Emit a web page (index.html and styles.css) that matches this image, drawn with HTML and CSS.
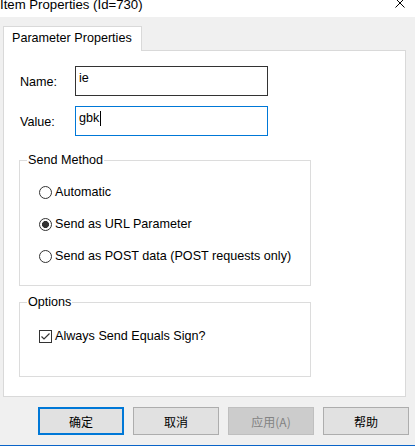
FILE: index.html
```html
<!DOCTYPE html>
<html>
<head>
<meta charset="utf-8">
<link rel="stylesheet" href="styles.css">
</head>
<body>
<div class="titlebar">
  <span class="title">Item Properties (Id=730)</span>
  <svg class="close" width="10" height="10" viewBox="0 0 10 10"><path d="M0.5 0.5 L9.5 9.5 M9.5 0.5 L0.5 9.5" stroke="#000" stroke-width="1" fill="none"/></svg>
</div>
<div class="dialog">
  <div class="tabs"><div class="tab">Parameter Properties</div></div>
  <div class="panel">
    <div class="field">
      <label>Name:</label>
      <div class="textbox">ie</div>
    </div>
    <div class="field">
      <label>Value:</label>
      <div class="textbox focused">gbk<span class="caret"></span></div>
    </div>
    <fieldset class="group method">
      <legend>Send Method</legend>
      <div class="choice"><span class="radio"></span>Automatic</div>
      <div class="choice"><span class="radio checked"></span>Send as URL Parameter</div>
      <div class="choice"><span class="radio"></span>Send as POST data (POST requests only)</div>
    </fieldset>
    <fieldset class="group options">
      <legend>Options</legend>
      <div class="choice"><span class="checkbox"><svg width="11" height="11" viewBox="0 0 11 11"><path d="M1.5 5.5 L4 8 L9.5 2.5" stroke="#333" stroke-width="1.2" fill="none"/></svg></span>Always Send Equals Sign?</div>
    </fieldset>
  </div>
  <div class="buttons">
    <button class="btn default">确定</button>
    <button class="btn">取消</button>
    <button class="btn disabled">应用(A)</button>
    <button class="btn">帮助</button>
  </div>
</div>
<div class="footer"></div>
</body>
</html>
```
FILE: styles.css
```css
html, body {
  margin: 0;
  padding: 0;
}
body {
  width: 415px;
  height: 447px;
  overflow: hidden;
  background: #f0f0f0;
  font-family: "Liberation Sans", Arial, sans-serif;
  font-size: 12.6px;
  color: #000;
}
.titlebar {
  height: 17px;
  background: #fff;
  display: flex;
  justify-content: space-between;
  overflow: hidden;
}
.title {
  font-size: 13.2px;
  line-height: 10px;
  white-space: nowrap;
}
.close {
  margin-top: -2px;
  margin-right: 10px;
}
.dialog {
  padding: 9px 0 0 3px;
}
.tabs {
  display: flex;
}
.tab {
  box-sizing: border-box;
  width: 139px;
  height: 25px;
  border: 1px solid #d9d9d9;
  border-bottom: none;
  background: #fff;
  padding-left: 8px;
  line-height: 22px;
  position: relative;
  z-index: 1;
  margin-bottom: -1px;
}
.panel {
  box-sizing: border-box;
  width: 403px;
  height: 347px;
  border: 1px solid #d9d9d9;
  background: #fff;
  padding: 15px 0 0 16px;
}
.field {
  display: flex;
  align-items: center;
}
.field + .field {
  margin-top: 10px;
}
.field label {
  width: 55px;
  line-height: 16px;
  padding-top: 1px;
}
.textbox {
  box-sizing: border-box;
  width: 193px;
  height: 30px;
  border: 1px solid #333;
  padding: 3px 3px 0;
  line-height: 16px;
}
.textbox.focused {
  border-color: #0078d7;
}
.caret {
  display: inline-block;
  width: 1px;
  height: 15px;
  margin-left: 1px;
  background: #000;
  vertical-align: -4px;
}
.group {
  box-sizing: border-box;
  width: 292px;
  margin: 0 0 0 -1px;
  border: 1px solid #dcdcdc;
  padding: 16px 0 21px 7px;
}
.group legend {
  padding: 0 1px;
  line-height: 16px;
}
.method {
  margin-top: 16px;
}
.options {
  margin-top: 8px;
  padding-top: 18px;
  padding-bottom: 32px;
}
.choice {
  display: flex;
  align-items: center;
  height: 16px;
  line-height: 16px;
  margin-left: 12px;
}
.choice + .choice {
  margin-top: 16px;
}
.radio {
  box-sizing: border-box;
  width: 13px;
  height: 13px;
  border: 1px solid #333;
  border-radius: 50%;
  margin-right: 3px;
  background: #fff;
}
.radio.checked {
  background: radial-gradient(circle, #333 0 3.2px, #fff 3.8px);
}
.checkbox {
  box-sizing: border-box;
  width: 13px;
  height: 13px;
  border: 1px solid #333;
  margin-right: 3px;
  display: flex;
}
.buttons {
  display: flex;
  gap: 9px;
  margin: 10px 0 0 35px;
}
.btn {
  box-sizing: border-box;
  width: 86px;
  height: 28px;
  margin: 0;
  padding: 0;
  border: 1px solid #adadad;
  background: #e1e1e1;
  font-family: "Noto Sans CJK SC", "Liberation Sans", sans-serif;
  font-size: 12px;
  color: #000;
}
.btn.default {
  border: 2px solid #0078d7;
}
.btn.disabled {
  background: #cccccc;
  border-color: #bfbfbf;
  color: #838383;
}
.footer {
  margin-top: 10px;
  height: 2px;
  border-top: 1px solid #0a64c8;
  background: #fff;
}
```
